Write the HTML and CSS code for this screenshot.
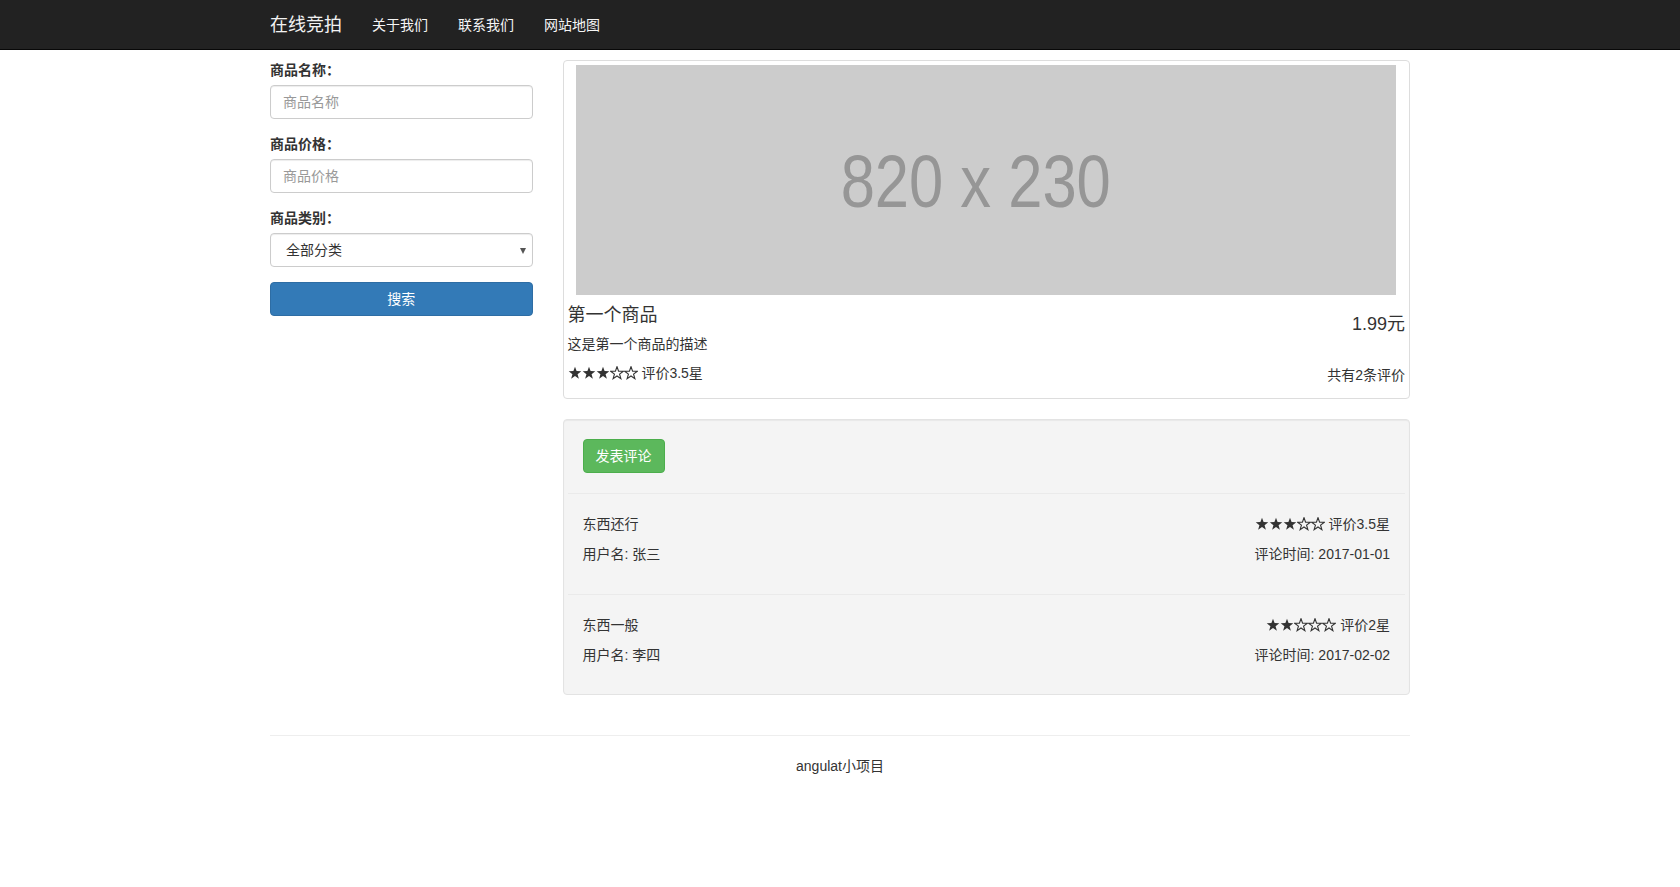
FILE: index.html
```html
<!DOCTYPE html>
<html lang="zh">
<head>
<meta charset="utf-8">
<title>在线竞拍</title>
<link rel="stylesheet" href="styles.css">
</head>
<body>
<nav class="navbar">
  <div class="navbar-inner">
    <a class="brand">在线竞拍</a>
    <ul class="nav">
      <li><a>关于我们</a></li>
      <li><a>联系我们</a></li>
      <li><a>网站地图</a></li>
    </ul>
  </div>
</nav>

<main class="main">
  <aside class="search">
    <div class="form-group">
      <label>商品名称：</label>
      <input class="form-control" type="text" placeholder="商品名称">
    </div>
    <div class="form-group">
      <label>商品价格：</label>
      <input class="form-control" type="text" placeholder="商品价格">
    </div>
    <div class="form-group">
      <label>商品类别：</label>
      <div class="select-wrap">
        <select class="form-control select">
          <option>全部分类</option>
        </select>
      </div>
    </div>
    <button class="btn btn-primary">搜索</button>
  </aside>

  <section class="content">
    <div class="thumbnail">
      <div class="placeholder"><span class="ph-text">820 x 230</span></div>
      <div class="caption-row">
        <h4 class="title">第一个商品</h4>
        <h4 class="price">1.99元</h4>
      </div>
      <p class="desc">这是第一个商品的描述</p>
      <div class="rating-row">
        <p class="rating"><span class="stars"><svg class="star full" viewBox="0 0 14 14"><polygon points="7,0.7 8.59,5.12 13.28,5.26 9.57,8.13 10.88,12.64 7,10 3.12,12.64 4.43,8.13 0.72,5.26 5.41,5.12"/></svg><svg class="star full" viewBox="0 0 14 14"><polygon points="7,0.7 8.59,5.12 13.28,5.26 9.57,8.13 10.88,12.64 7,10 3.12,12.64 4.43,8.13 0.72,5.26 5.41,5.12"/></svg><svg class="star full" viewBox="0 0 14 14"><polygon points="7,0.7 8.59,5.12 13.28,5.26 9.57,8.13 10.88,12.64 7,10 3.12,12.64 4.43,8.13 0.72,5.26 5.41,5.12"/></svg><svg class="star empty" viewBox="0 0 14 14"><polygon points="7,0.7 8.59,5.12 13.28,5.26 9.57,8.13 10.88,12.64 7,10 3.12,12.64 4.43,8.13 0.72,5.26 5.41,5.12"/></svg><svg class="star empty" viewBox="0 0 14 14"><polygon points="7,0.7 8.59,5.12 13.28,5.26 9.57,8.13 10.88,12.64 7,10 3.12,12.64 4.43,8.13 0.72,5.26 5.41,5.12"/></svg></span> 评价3.5星</p>
        <p class="count">共有2条评价</p>
      </div>
    </div>

    <div class="well">
      <div><button class="btn btn-success">发表评论</button></div>
      <div class="review-row">
        <hr class="divider">
        <div class="review">
          <div class="review-left">
            <p>东西还行</p>
            <p>用户名: 张三</p>
          </div>
          <div class="review-right">
            <p><span class="stars"><svg class="star full" viewBox="0 0 14 14"><polygon points="7,0.7 8.59,5.12 13.28,5.26 9.57,8.13 10.88,12.64 7,10 3.12,12.64 4.43,8.13 0.72,5.26 5.41,5.12"/></svg><svg class="star full" viewBox="0 0 14 14"><polygon points="7,0.7 8.59,5.12 13.28,5.26 9.57,8.13 10.88,12.64 7,10 3.12,12.64 4.43,8.13 0.72,5.26 5.41,5.12"/></svg><svg class="star full" viewBox="0 0 14 14"><polygon points="7,0.7 8.59,5.12 13.28,5.26 9.57,8.13 10.88,12.64 7,10 3.12,12.64 4.43,8.13 0.72,5.26 5.41,5.12"/></svg><svg class="star empty" viewBox="0 0 14 14"><polygon points="7,0.7 8.59,5.12 13.28,5.26 9.57,8.13 10.88,12.64 7,10 3.12,12.64 4.43,8.13 0.72,5.26 5.41,5.12"/></svg><svg class="star empty" viewBox="0 0 14 14"><polygon points="7,0.7 8.59,5.12 13.28,5.26 9.57,8.13 10.88,12.64 7,10 3.12,12.64 4.43,8.13 0.72,5.26 5.41,5.12"/></svg></span> 评价3.5星</p>
            <p>评论时间: 2017-01-01</p>
          </div>
        </div>
      </div>
      <div class="review-row">
        <hr class="divider">
        <div class="review">
          <div class="review-left">
            <p>东西一般</p>
            <p>用户名: 李四</p>
          </div>
          <div class="review-right">
            <p><span class="stars"><svg class="star full" viewBox="0 0 14 14"><polygon points="7,0.7 8.59,5.12 13.28,5.26 9.57,8.13 10.88,12.64 7,10 3.12,12.64 4.43,8.13 0.72,5.26 5.41,5.12"/></svg><svg class="star full" viewBox="0 0 14 14"><polygon points="7,0.7 8.59,5.12 13.28,5.26 9.57,8.13 10.88,12.64 7,10 3.12,12.64 4.43,8.13 0.72,5.26 5.41,5.12"/></svg><svg class="star empty" viewBox="0 0 14 14"><polygon points="7,0.7 8.59,5.12 13.28,5.26 9.57,8.13 10.88,12.64 7,10 3.12,12.64 4.43,8.13 0.72,5.26 5.41,5.12"/></svg><svg class="star empty" viewBox="0 0 14 14"><polygon points="7,0.7 8.59,5.12 13.28,5.26 9.57,8.13 10.88,12.64 7,10 3.12,12.64 4.43,8.13 0.72,5.26 5.41,5.12"/></svg><svg class="star empty" viewBox="0 0 14 14"><polygon points="7,0.7 8.59,5.12 13.28,5.26 9.57,8.13 10.88,12.64 7,10 3.12,12.64 4.43,8.13 0.72,5.26 5.41,5.12"/></svg></span> 评价2星</p>
            <p>评论时间: 2017-02-02</p>
          </div>
        </div>
      </div>
    </div>
  </section>
</main>

<footer class="footer">
  <hr class="footer-line">
  <p>angulat小项目</p>
</footer>
</body>
</html>
```

FILE: styles.css
```css
* { box-sizing: border-box; }

html, body {
  margin: 0;
  padding: 0;
  background: #fff;
}

body {
  font-family: "Liberation Sans", Arial, "Noto Sans CJK SC", sans-serif;
  font-size: 14px;
  line-height: 20px;
  color: #333;
}

p { margin: 0 0 10px; }

/* navbar */
.navbar {
  height: 50px;
  background: #222;
  border-bottom: 1px solid #080808;
}
.navbar-inner {
  width: 1140px;
  margin: 0 auto;
  display: flex;
  align-items: flex-start;
}
.brand {
  font-size: 18px;
  line-height: 20px;
  padding: 15px 15px 14px 0;
  color: #f2f2f2;
}
.nav {
  display: flex;
  list-style: none;
  margin: 0;
  padding: 0;
}
.nav a {
  display: block;
  padding: 15px 15px 14px;
  line-height: 20px;
  color: #f5f5f5;
}

/* main layout */
.main {
  width: 1140px;
  margin: 0 auto;
  padding-top: 10px;
  display: grid;
  grid-template-columns: 262.5px 847.5px;
  column-gap: 30px;
  align-items: start;
}

/* search form */
.form-group { margin-bottom: 15px; }
.form-group label {
  display: inline-block;
  font-weight: bold;
  margin-bottom: 5px;
}
.form-control {
  display: block;
  width: 100%;
  height: 34px;
  padding: 6px 12px;
  font-family: inherit;
  font-size: 14px;
  line-height: 20px;
  color: #555;
  background: #fff;
  border: 1px solid #ccc;
  border-radius: 4px;
  box-shadow: inset 0 1px 1px rgba(0,0,0,.075);
  outline: none;
}
.form-control::placeholder { color: #999; }

.select-wrap { position: relative; }
.select {
  -webkit-appearance: none;
  appearance: none;
  padding-left: 15px;
  color: #333;
}
.select-wrap::after {
  content: "";
  position: absolute;
  right: 7px;
  top: 15px;
  border-left: 3px solid transparent;
  border-right: 3px solid transparent;
  border-top: 6px solid #555;
}

.btn {
  display: inline-block;
  padding: 6px 12px;
  font-family: inherit;
  font-size: 14px;
  line-height: 20px;
  border: 1px solid transparent;
  border-radius: 4px;
  color: #fff;
  cursor: pointer;
}
.btn-primary {
  display: block;
  width: 100%;
  background: #337ab7;
  border-color: #2e6da4;
}
.btn-success {
  background: #5cb85c;
  border-color: #4cae4c;
}

/* product thumbnail */
.thumbnail {
  padding: 4px;
  border: 1px solid #ddd;
  border-radius: 4px;
  background: #fff;
  margin-bottom: 20px;
}
.placeholder {
  width: 820px;
  height: 230px;
  margin: 0 auto;
  background: #ccc;
  display: flex;
  align-items: center;
  justify-content: center;
}
.ph-text {
  display: inline-block;
  font-family: "Liberation Sans", Arial, sans-serif;
  font-size: 75px;
  line-height: 1;
  color: #969696;
  transform: scaleX(0.82);
  margin-right: 22px;
  margin-top: 2px;
}
.caption-row {
  display: flex;
  justify-content: space-between;
  align-items: flex-start;
}
.caption-row h4 {
  font-size: 18px;
  font-weight: normal;
  line-height: 20px;
  margin: 0;
}
.title { margin-top: 10px !important; }
.price { margin-top: 19px !important; }
.desc { margin-bottom: 9px; }
.rating-row {
  display: flex;
  justify-content: space-between;
  align-items: flex-start;
}
.rating { margin: 0; }
.count { margin: 2px 0 9px; }

.stars {
  display: inline-flex;
  vertical-align: -2px;
}
.star {
  width: 14px;
  height: 14px;
  display: block;
}
.star.full polygon { fill: #333; }
.star.empty polygon {
  fill: none;
  stroke: #333;
  stroke-width: 1.1;
  stroke-linejoin: miter;
}

/* reviews well */
.well {
  padding: 19px;
  background: #f4f4f4;
  border: 1px solid #e3e3e3;
  border-radius: 4px;
  box-shadow: inset 0 1px 1px rgba(0,0,0,.05);
  margin-bottom: 20px;
}
.review-row { margin: 0 -15px; }
.divider {
  margin: 20px 0;
  border: 0;
  border-top: 1px solid #eaeaea;
  height: 0;
}
.review {
  display: flex;
  justify-content: space-between;
  padding: 0 15px;
}
.review-right { text-align: right; }

/* footer */
.footer {
  width: 1140px;
  margin: 0 auto;
  text-align: center;
}
.footer-line {
  margin: 20px 0;
  border: 0;
  border-top: 1px solid #eee;
  height: 0;
}
```
